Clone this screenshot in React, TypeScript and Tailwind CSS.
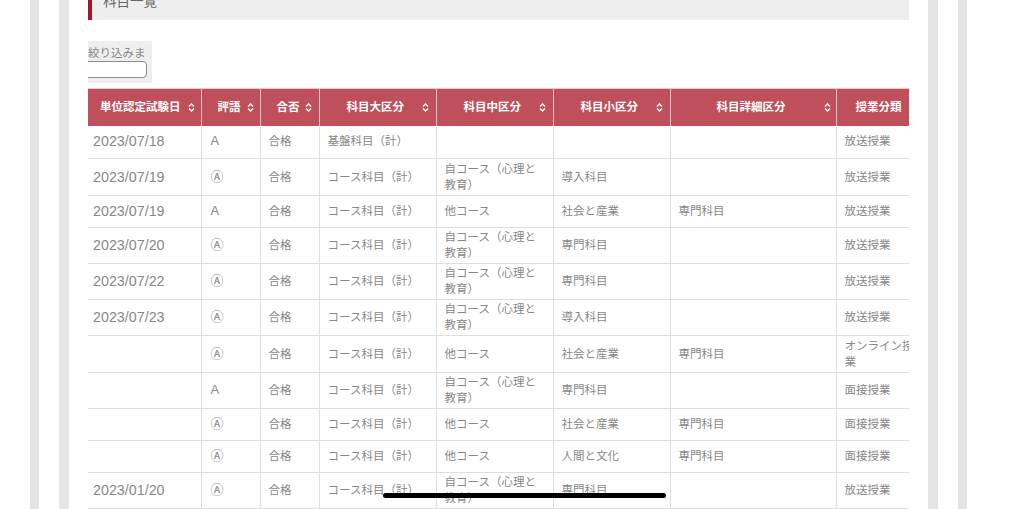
const font = "font-['Liberation_Sans','Noto_Sans_CJK_JP',sans-serif]";

const headers = [
  { label: "単位認定試験日", width: "w-[113px]", pad: "pl-[12px]", gap: "ml-[7px]" },
  { label: "評語", width: "w-[59px]", pad: "pl-[16px]", gap: "ml-[6px]" },
  { label: "合否", width: "w-[59px]", pad: "pl-[16px]", gap: "ml-[5px]" },
  { label: "科目大区分", width: "w-[117px]", pad: "pl-[27px]", gap: "ml-[18px]" },
  { label: "科目中区分", width: "w-[117px]", pad: "pl-[27px]", gap: "ml-[18px]" },
  { label: "科目小区分", width: "w-[117px]", pad: "pl-[27px]", gap: "ml-[18px]" },
  { label: "科目詳細区分", width: "w-[166px]", pad: "pl-[46px]", gap: "ml-[38px]" },
  { label: "授業分類", width: "w-[89px]", pad: "pl-[19px]", gap: "ml-[9px]" },
];

const HOME = "自コース（心理と教育）";
const OTHER = "他コース";
const COURSE = "コース科目（計）";

const rows = [
  { h: "h-[33px]", date: "2023/07/18", grade: "A", big: "基盤科目（計）", mid: "", small: "", detail: "", kind: "放送授業" },
  { h: "h-[37px]", date: "2023/07/19", grade: "Ⓐ", big: COURSE, mid: HOME, small: "導入科目", detail: "", kind: "放送授業" },
  { h: "h-[32px]", date: "2023/07/19", grade: "A", big: COURSE, mid: OTHER, small: "社会と産業", detail: "専門科目", kind: "放送授業" },
  { h: "h-[36px]", date: "2023/07/20", grade: "Ⓐ", big: COURSE, mid: HOME, small: "専門科目", detail: "", kind: "放送授業" },
  { h: "h-[36px]", date: "2023/07/22", grade: "Ⓐ", big: COURSE, mid: HOME, small: "専門科目", detail: "", kind: "放送授業" },
  { h: "h-[36px]", date: "2023/07/23", grade: "Ⓐ", big: COURSE, mid: HOME, small: "導入科目", detail: "", kind: "放送授業" },
  { h: "h-[37px]", date: "", grade: "Ⓐ", big: COURSE, mid: OTHER, small: "社会と産業", detail: "専門科目", kind: "オンライン授業" },
  { h: "h-[36px]", date: "", grade: "A", big: COURSE, mid: HOME, small: "専門科目", detail: "", kind: "面接授業" },
  { h: "h-[32px]", date: "", grade: "Ⓐ", big: COURSE, mid: OTHER, small: "社会と産業", detail: "専門科目", kind: "面接授業" },
  { h: "h-[32px]", date: "", grade: "Ⓐ", big: COURSE, mid: OTHER, small: "人間と文化", detail: "専門科目", kind: "面接授業" },
  { h: "h-[36px]", date: "2023/01/20", grade: "Ⓐ", big: COURSE, mid: HOME, small: "専門科目", detail: "", kind: "放送授業" },
];

const SortIcon = () => (
  <svg width="7" height="9" viewBox="0 0 7 9" fill="none" stroke="#fff" strokeWidth="1.4" className="shrink-0">
    <path d="M1 3.4 3.5 1 6 3.4" />
    <path d="M1 5.6 3.5 8 6 5.6" />
  </svg>
);

const base = "border-b-[1.5px] border-[#dedede] pt-0 pb-[1px] pr-[7px] align-middle leading-[16px] text-[#888888]";
const cell = `${base} border-l-[1.5px] pl-[8px] text-[11.5px]`;

export default function App() {
  return (
    <div className={`${font} h-[509px] w-[1024px] overflow-hidden bg-white`}>
      <div className="ml-[30px] h-full w-[937px] border-x-[9px] border-[#e5e5e5] px-[20px]">
        <div className="h-full overflow-hidden border-x-[10px] border-[#e5e5e5] px-[19px]">
          {/* Title */}
          <div className="-mt-[16px] flex h-[36px] items-center border-l-[4px] border-[#a3192a] bg-[#eeeeee] pl-[11px] text-[13.5px] text-[#666]">
            科目一覧
          </div>

          {/* Filter */}
          <div className="mt-[21px] h-[42px] w-[64px] overflow-hidden bg-[#eeeeee] pt-[4px]">
            <div className="whitespace-nowrap text-[11.5px] leading-[16px] text-[#888888]">絞り込みま</div>
            <div className="-ml-[20px] h-[17px] w-[79px] rounded-[4px] border border-[#8c8c8c] bg-white" />
          </div>

          {/* Table */}
          <div className="mt-[5px] w-[821px] overflow-hidden">
            <table className="w-[837px] table-fixed border-collapse">
              <thead>
                <tr className="h-[37px] bg-[#bf505b]">
                  {headers.map((head, i) => (
                    <th
                      key={head.label}
                      className={`${head.width} ${i > 0 ? "border-l-[1.5px] border-[#ecc6ca]" : ""} border-t border-[#ecc6ca] p-0 text-[11.5px] font-bold text-white`}
                    >
                      <div className={`flex items-center whitespace-nowrap pt-[1px] ${head.pad}`}>
                        <span>{head.label}</span>
                        <span className={head.gap}>
                          <SortIcon />
                        </span>
                      </div>
                    </th>
                  ))}
                </tr>
              </thead>
              <tbody>
                {rows.map((row, i) => (
                  <tr key={i} className={row.h}>
                    <td className={`${base} pl-[5px] text-[14.3px]`}>{row.date}</td>
                    <td className={`${base} border-l-[1.5px] pl-[9px] text-[13px]`}>{row.grade}</td>
                    <td className={cell}>合格</td>
                    <td className={cell}>{row.big}</td>
                    <td className={cell}>{row.mid}</td>
                    <td className={cell}>{row.small}</td>
                    <td className={cell}>{row.detail}</td>
                    <td className={cell}>{row.kind}</td>
                  </tr>
                ))}
              </tbody>
            </table>
          </div>
        </div>
      </div>

      {/* iOS home indicator */}
      <div className="absolute left-[383px] top-[493px] h-[5px] w-[283px] rounded-full bg-black" />
    </div>
  );
}
